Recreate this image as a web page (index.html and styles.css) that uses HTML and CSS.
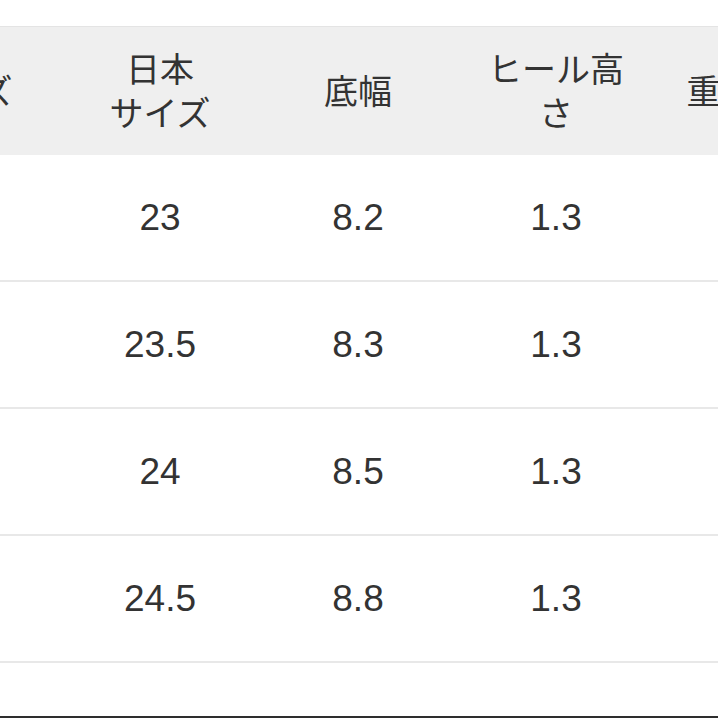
FILE: index.html
```html
<!DOCTYPE html>
<html lang="ja">
<head>
<meta charset="utf-8">
<link rel="stylesheet" href="styles.css">
</head>
<body>
<div class="page">
  <div class="top"></div>
  <div class="table">
    <div class="row head">
      <div class="cell">サイズ</div>
      <div class="cell">日本<br>サイズ</div>
      <div class="cell">底幅</div>
      <div class="cell">ヒール高<br>さ</div>
      <div class="cell weight">重量（g）</div>
    </div>
    <div class="row">
      <div class="cell">36</div>
      <div class="cell">23</div>
      <div class="cell">8.2</div>
      <div class="cell">1.3</div>
      <div class="cell"></div>
    </div>
    <div class="row">
      <div class="cell">37</div>
      <div class="cell">23.5</div>
      <div class="cell">8.3</div>
      <div class="cell">1.3</div>
      <div class="cell"></div>
    </div>
    <div class="row">
      <div class="cell">38</div>
      <div class="cell">24</div>
      <div class="cell">8.5</div>
      <div class="cell">1.3</div>
      <div class="cell"></div>
    </div>
    <div class="row">
      <div class="cell">39</div>
      <div class="cell">24.5</div>
      <div class="cell">8.8</div>
      <div class="cell">1.3</div>
      <div class="cell"></div>
    </div>
  </div>
  <div class="bottom"></div>
</div>
</body>
</html>
```
FILE: styles.css
```css
html, body {
  margin: 0;
  padding: 0;
  background: #ffffff;
}
.page {
  width: 718px;
  height: 718px;
  overflow: hidden;
  background: #ffffff;
  font-family: "Liberation Sans", "Noto Sans CJK JP", sans-serif;
  color: #333333;
  display: flex;
  flex-direction: column;
}
.top {
  height: 26px;
  flex: none;
  border-bottom: 1px solid #e4e4e4;
}
.table {
  flex: none;
  margin-left: -137px;
  display: flex;
  flex-direction: column;
}
.row {
  display: flex;
  height: 125px;
  border-bottom: 2px solid #e8e8e8;
}
.row .cell {
  flex: none;
  width: 198px;
  box-sizing: border-box;
  display: flex;
  align-items: center;
  justify-content: center;
  text-align: center;
  font-size: 37px;
  white-space: nowrap;
}
.row.head {
  height: 128px;
  background: #efefef;
  border-bottom: none;
}
.row.head .cell {
  font-family: "Noto Sans CJK JP", sans-serif;
  font-size: 34px;
  line-height: 44px;
  padding-bottom: 2px;
}
.row.head .cell.weight {
  padding-left: 20px;
}
.row:not(.head) .cell:first-child {
  color: #fafafa;
}
.bottom {
  flex: 1;
  border-bottom: 2px solid #2e2e2e;
}
```
